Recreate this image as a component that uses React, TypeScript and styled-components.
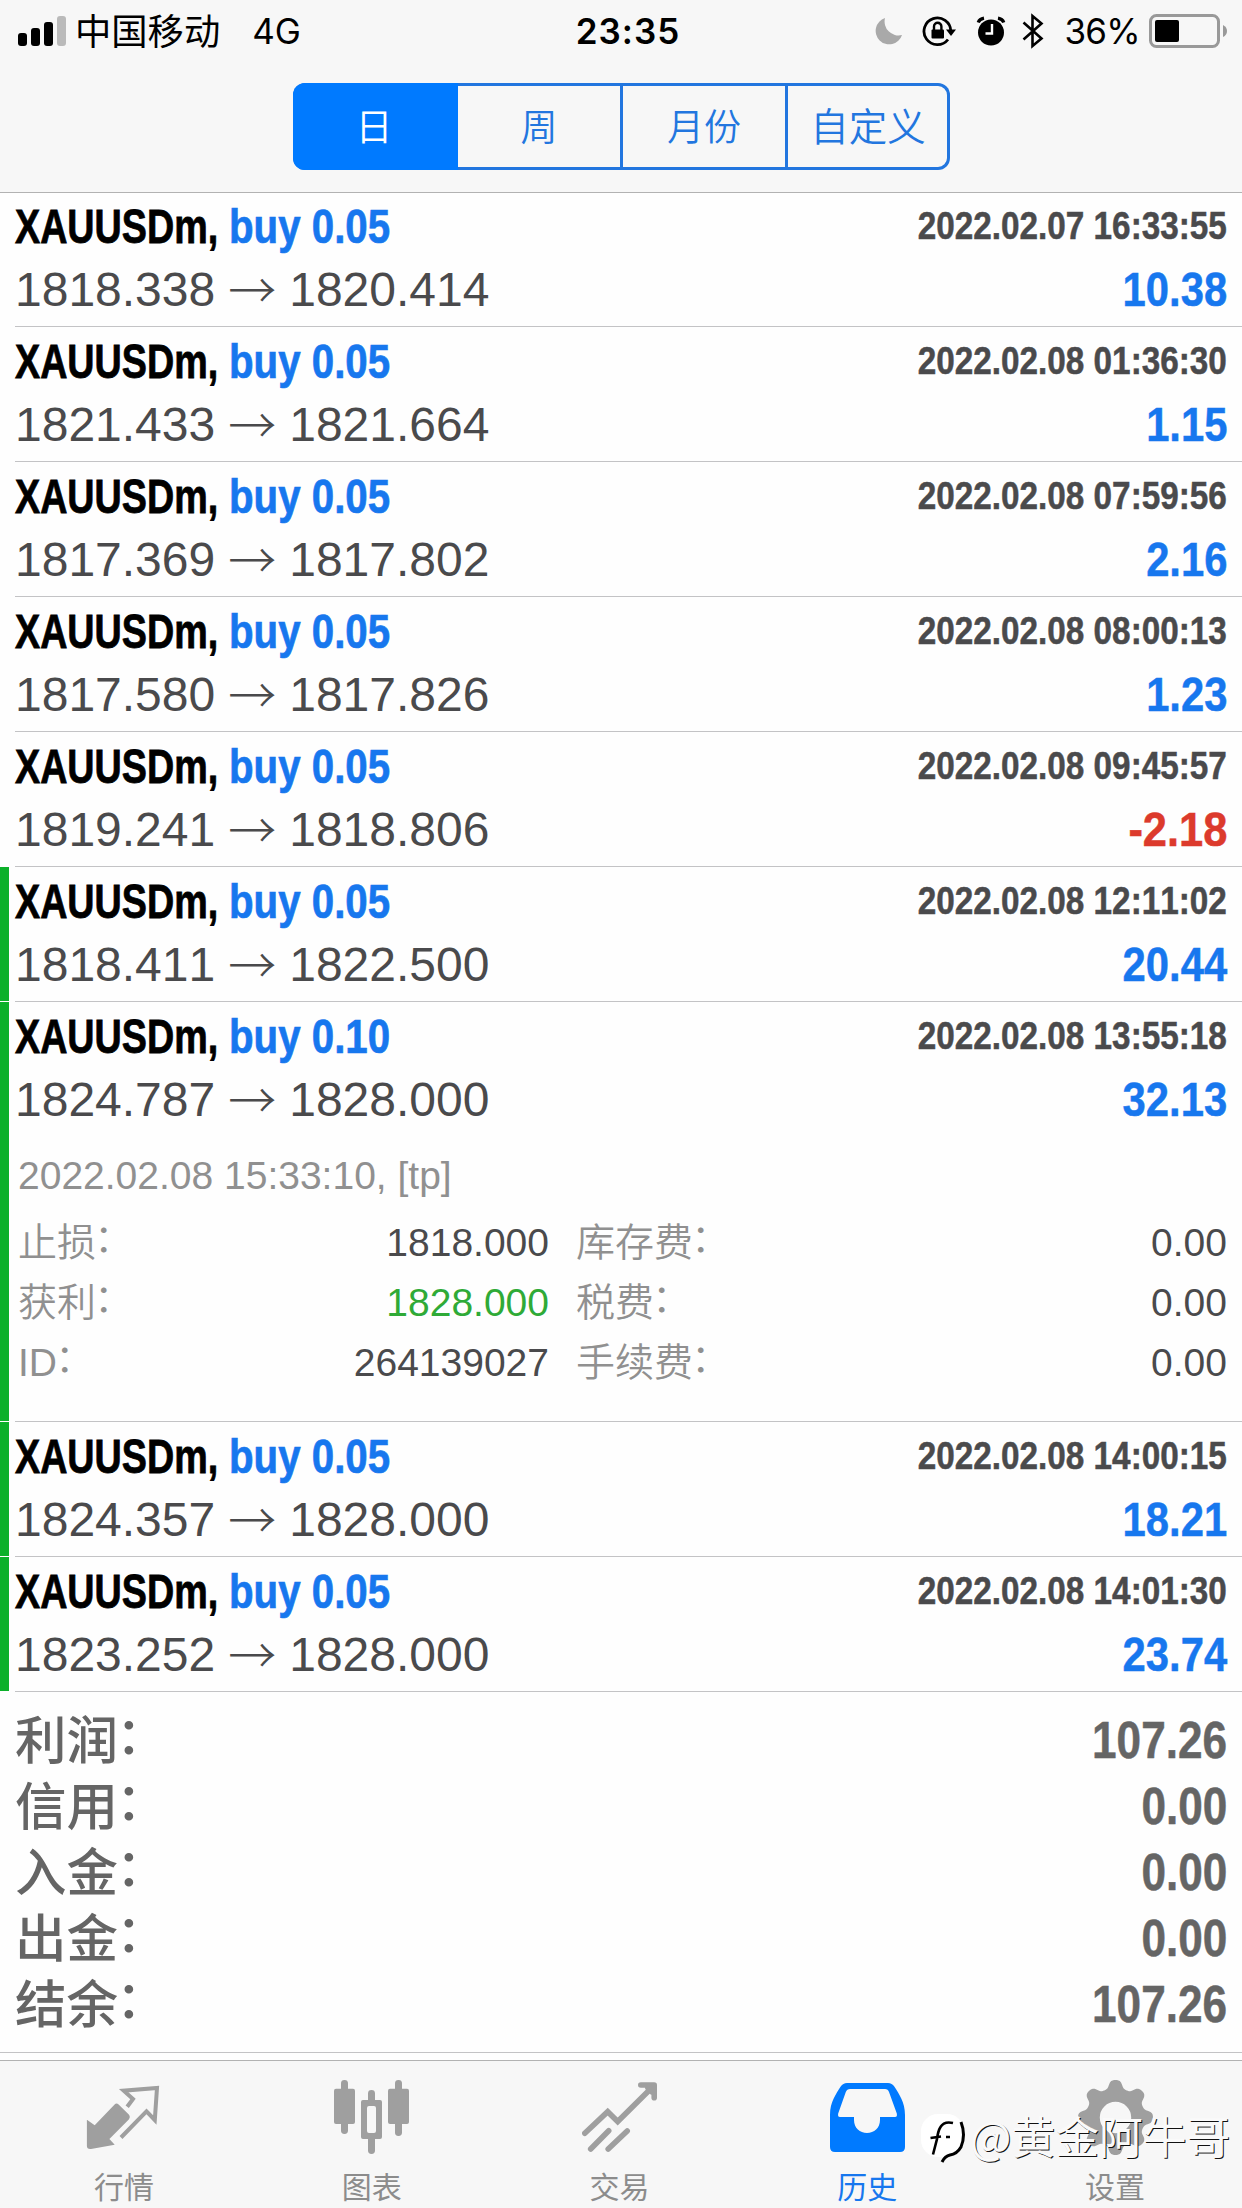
import React from "react";
import styled, { createGlobalStyle, css } from "styled-components";

const sans = `"Liberation Sans", "Noto Sans CJK SC", sans-serif`;
const system = `Inter, "Noto Sans CJK SC", sans-serif`;
const cjk = `"Noto Sans CJK SC", sans-serif`;

const color = {
  chrome: "#f7f7f7",
  hairline: "#c3c3c5",
  barLine: "#b2b2b2",
  accent: "#007aff",
  segment: "#2276df",
  buy: "#1777ee",
  sell: "#dc3a2c",
  ink: "#4a4a4c",
  muted: "#909090",
  summary: "#656565",
  tab: "#9f9f9f",
  tabText: "#8c8c8c",
  takeProfit: "#0cb02a",
};

const GlobalStyle = createGlobalStyle`
  body { margin: 0; background: #fff; }
  * { box-sizing: border-box; }
`;

const Screen = styled.div`
  position: relative;
  display: flex;
  flex-direction: column;
  width: 1242px;
  height: 2208px;
  overflow: hidden;
  background: #fefefe;
  font-family: ${sans};
  font-kerning: none;
  color: ${color.ink};
  white-space: nowrap;
`;

/* ---------- header ---------- */

const Header = styled.header`
  flex: none;
  height: 193px;
  background: ${color.chrome};
  border-bottom: 1px solid ${color.barLine};
`;

const StatusBar = styled.div`
  display: grid;
  grid-template-columns: 1fr auto 1fr;
  height: 62px;
  padding: 0 15px 0 18px;
  color: #000;
  font: 400 35px/62px ${system};
`;

const StatusSide = styled.div<{ $end?: boolean }>`
  display: flex;
  align-items: center;
  justify-content: ${(p) => (p.$end ? "flex-end" : "flex-start")};
`;

const Carrier = styled.span`
  height: 62px;
  margin: 0 32px 0 8px;
  font: 400 36.3px/58px ${cjk};
`;

const Clock = styled.span`
  font-weight: 600;
  letter-spacing: 1px;
  padding-left: 11px;
`;

const StatusGlyph = styled.svg<{ $gap?: number }>`
  flex: none;
  margin-right: ${(p) => p.$gap ?? 0}px;
`;

const Percent = styled.span`
  margin-right: 9px;
  letter-spacing: -0.7px;
`;

const Segments = styled.div`
  display: grid;
  grid-template-columns: 165px 165px 165px 162px;
  width: 657px;
  height: 87px;
  margin: 21px 0 0 293px;
  border-radius: 12px;
  overflow: hidden;
  box-shadow: inset 0 0 0 3px ${color.segment};
`;

const Segment = styled.button<{ $on?: boolean }>`
  border: 0;
  border-right: 3px solid ${color.segment};
  padding: 0 0 4px;
  background: ${(p) => (p.$on ? color.accent : "transparent")};
  color: ${(p) => (p.$on ? "#fff" : color.segment)};
  font: 350 37px/82px ${cjk};
  text-align: center;
  &:first-child { border-color: ${color.accent}; }
  &:last-child { border-right: 0; padding: 0 2px 6px 0; font-size: 38.5px; line-height: 80px; }
`;

/* ---------- deals ---------- */

const Deals = styled.main`
  flex: none;
  margin-top: -1px;
`;

const Deal = styled.article<{ $hit?: boolean; $tall?: boolean }>`
  display: flex;
  height: ${(p) => (p.$tall ? 420 : 135)}px;
  background: ${(p) =>
    p.$hit
      ? `linear-gradient(${color.takeProfit}, ${color.takeProfit}) 0 0 / 9px calc(100% - 1px) no-repeat`
      : "none"};
`;

const DealBody = styled.div`
  flex: 1;
  margin-left: 15px;
  padding: 5px 15px 0 0;
  border-bottom: 1px solid ${color.hairline};
`;

const Line = styled.div<{ $h: number }>`
  display: flex;
  justify-content: space-between;
  align-items: center;
  height: ${(p) => p.$h}px;
`;

const narrow = css<{ $sx: number }>`
  display: inline-block;
  font-weight: 700;
  transform: scaleX(${(p) => p.$sx});
`;

const Title = styled.div`
  display: flex;
  font-size: 48.5px;
  line-height: 58px;
  font-kerning: normal;
`;

const Symbol = styled.span<{ $sx: number }>`
  ${narrow}
  width: 214px;
  transform-origin: left;
  color: #000;
  -webkit-text-stroke: 0.8px #000;
`;

const Side = styled.span<{ $sx: number }>`
  ${narrow}
  transform-origin: left;
  color: ${color.buy};
  -webkit-text-stroke: 0.7px ${color.buy};
`;

const Time = styled.span<{ $sx: number }>`
  ${narrow}
  transform-origin: right;
  font-size: 38px;
  line-height: 58px;
  -webkit-text-stroke: 0.5px ${color.ink};
`;

const Prices = styled.span`
  display: flex;
  font-size: 48px;
  line-height: 70px;
`;

const Arrow = styled.span`
  width: 48px;
  height: 70px;
  margin: 0 13px;
  font: 300 48px/64px ${cjk};
`;

const Profit = styled.span<{ $sx: number; $loss: boolean }>`
  ${narrow}
  transform-origin: right;
  font-size: 48px;
  line-height: 70px;
  color: ${(p) => (p.$loss ? color.sell : color.buy)};
  -webkit-text-stroke: 0.5px currentColor;
`;

const Comment = styled.p`
  margin: 4px 0 0 3px;
  font-size: 39px;
  line-height: 74px;
  color: ${color.muted};
`;

const Details = styled.dl`
  display: grid;
  grid-template-columns: 200px 331px 200px 1fr;
  margin: 0;
  padding-left: 3px;
  font-size: 39px;
  line-height: 60px;
`;

const Label = styled.dt<{ $second?: boolean }>`
  height: 60px;
  padding-left: ${(p) => (p.$second ? 27 : 0)}px;
  color: ${color.muted};
  font-weight: 350;
`;

/* Lifts the full-width colon to the optical middle of the characters without stretching the line. */
const Colon = styled.span<{ $lift: number }>`
  line-height: 0;
  margin-left: -2px;
  vertical-align: ${(p) => p.$lift}px;
`;

const Value = styled.dd<{ $green?: boolean }>`
  margin: 0;
  height: 60px;
  text-align: right;
  color: ${(p) => (p.$green ? "#2faa37" : color.ink)};
`;

/* ---------- summary ---------- */

const Summary = styled.section`
  flex: none;
  height: 361px;
  padding: 16px 15px 0 15px;
  border-bottom: 1px solid ${color.hairline};
  color: ${color.summary};
`;

const SummaryLabel = styled.span`
  height: 66px;
  font: 500 51.5px/57px ${cjk};
`;

const SummaryValue = styled.span<{ $sx: number }>`
  ${narrow}
  transform-origin: right;
  font-size: 51px;
  line-height: 66px;
  -webkit-text-stroke: 0.5px currentColor;
`;

/* ---------- tab bar ---------- */

const TabBar = styled.nav`
  flex: none;
  display: flex;
  height: 148px;
  margin-top: 7px;
  padding-right: 3px;
  background: ${color.chrome};
  border-top: 1px solid ${color.barLine};
`;

const Tab = styled.a<{ $on?: boolean }>`
  flex: 1;
  display: flex;
  flex-direction: column;
  align-items: center;
  padding-top: 19px;
  color: ${(p) => (p.$on ? color.accent : color.tab)};
`;

const TabIcon = styled.svg`
  flex: none;
  width: 75px;
  height: 75px;
`;

const TabLabel = styled.span<{ $on?: boolean }>`
  margin-top: 10px;
  font: 400 30px/40px ${cjk};
  color: ${(p) => (p.$on ? color.buy : color.tabText)};
`;

const Watermark = styled.div`
  position: absolute;
  left: 920px;
  top: 2107px;
  display: flex;
  align-items: center;
  height: 60px;
  color: #fafafa;
  font: 400 43.8px/56px ${cjk};
  text-shadow: 1px 1px 0 #111;
`;

const WatermarkText = styled.span`
  height: 60px;
`;

const WatermarkLogo = styled.svg`
  width: 46px;
  height: 52px;
  margin-right: 4px;
`;

const deals = [
  ["0.05", "2022.02.07 16:33:55", "1818.338", "1820.414", "10.38"],
  ["0.05", "2022.02.08 01:36:30", "1821.433", "1821.664", "1.15"],
  ["0.05", "2022.02.08 07:59:56", "1817.369", "1817.802", "2.16"],
  ["0.05", "2022.02.08 08:00:13", "1817.580", "1817.826", "1.23"],
  ["0.05", "2022.02.08 09:45:57", "1819.241", "1818.806", "-2.18"],
  ["0.05", "2022.02.08 12:11:02", "1818.411", "1822.500", "20.44"],
  ["0.10", "2022.02.08 13:55:18", "1824.787", "1828.000", "32.13"],
  ["0.05", "2022.02.08 14:00:15", "1824.357", "1828.000", "18.21"],
  ["0.05", "2022.02.08 14:01:30", "1823.252", "1828.000", "23.74"],
];
const firstHit = 5;
const expanded = 6;

const details = [
  ["止损", "1818.000", "库存费", "0.00"],
  ["获利", "1828.000", "税费", "0.00"],
  ["ID", "264139027", "手续费", "0.00"],
];

const totals = [
  ["利润", "107.26"],
  ["信用", "0.00"],
  ["入金", "0.00"],
  ["出金", "0.00"],
  ["结余", "107.26"],
];

function gearPath() {
  const points: string[] = [];
  for (let i = 0; i < 160; i++) {
    const a = (i / 160) * Math.PI * 2;
    const r = 33.4 + (4.1 * Math.tanh(1.6 * Math.cos(8 * a))) / Math.tanh(1.6);
    points.push(`${(37.5 + r * Math.sin(a)).toFixed(2)} ${(37.5 - r * Math.cos(a)).toFixed(2)}`);
  }
  return `M${points.join("L")}ZM37.5 21.8a15.7 15.7 0 1 0 0 31.4a15.7 15.7 0 1 0 0-31.4Z`;
}

const tabs = [
  {
    label: "行情",
    icon: (
      <>
        <path
          d="M.9 39.7 8.7 45.3 28.6 24.4Q30.6 22.4 32.6 24.6L42.8 34.6Q44.8 37 42.8 39.4L23.4 59 28.7 64.7 5 69Q.9 69.5.9 66Z"
          fill="currentColor"
        />
        <path
          d="M41.2 26.8 47 19 37.7 10.7 71 7.9 68.8 40 60.5 31.3 35 57.5"
          fill="none"
          stroke="currentColor"
          strokeWidth="4"
        />
      </>
    ),
  },
  {
    label: "图表",
    icon: (
      <g fill="currentColor">
        <rect x="0" y="8.7" width="21" height="35.3" rx="2" />
        <rect x="7" y="0" width="7" height="54" rx="3.4" />
        <path
          fillRule="evenodd"
          d="M29 20H46a2 2 0 0 1 2 2V57a2 2 0 0 1-2 2H29a2 2 0 0 1-2-2V22a2 2 0 0 1 2-2ZM35 26a2 2 0 0 0-2 2V51a2 2 0 0 0 2 2H40a2 2 0 0 0 2-2V28a2 2 0 0 0-2-2Z"
        />
        <path d="M34 21V13.4a3.5 3.4 0 0 1 7 0V21ZM34 58V70.6a3.5 3.4 0 0 0 7 0V58Z" />
        <rect x="54" y="8.7" width="21" height="35.3" rx="2" />
        <rect x="61" y="0" width="7" height="56" rx="3.4" />
      </g>
    ),
  },
  {
    label: "交易",
    icon: (
      <g fill="none" stroke="currentColor" strokeWidth="5.6" strokeLinecap="round">
        <path d="M2.8 53.3 25.7 31.7 35.7 41.5 71.5 6" strokeLinejoin="miter" />
        <path d="M58.8 5H72.2V17.8M66 8 70 12" strokeLinejoin="round" />
        <path d="M8.7 69 26.7 50.8M26.2 69 45.2 51" />
      </g>
    ),
  },
  {
    label: "历史",
    icon: (
      <path
        fill="currentColor"
        fillRule="evenodd"
        d="M0 67V35C0 22 6 14 10.7 6.5Q13 3 17 3H58Q62 3 64.3 6.5C69 14 75 22 75 35V67Q75 72 70 72H5Q0 72 0 67ZM20 9Q17 9 15.8 12L8.2 33.5Q7.5 37 10 37H24V40C24 48 30 53 37 53S50 48 50 40V37H65Q67.5 37 66.8 33.5L59 12Q58 9 55 9Z"
      />
    ),
  },
  { label: "设置", icon: <path fill="currentColor" fillRule="evenodd" d={gearPath()} /> },
];

function StatusIcons() {
  return (
    <>
      <StatusGlyph width="28" height="28" viewBox="0 0 28 28" $gap={19}>
        <path d="M10 1A14 14 0 0 0 27 18A13.5 13.5 0 1 1 10 1Z" fill="#a9a9a9" />
      </StatusGlyph>
      <StatusGlyph width="35" height="32" viewBox="0 0 35 32" $gap={19}>
        <path d="M26 24.5A13.4 13.4 0 1 1 28.8 16" fill="none" stroke="#000" strokeWidth="2.8" />
        <path d="M24 14.5H34L29 21Z" />
        <rect x="9.5" y="14.5" width="12.5" height="9" rx="1" />
        <path d="M12 15V11.5a3.7 3.7 0 0 1 7.4 0V15" fill="none" stroke="#000" strokeWidth="2.4" />
      </StatusGlyph>
      <StatusGlyph width="30" height="30" viewBox="0 0 30 30" $gap={16}>
        <circle cx="15" cy="16.5" r="13" />
        <path d="M2.2 6.5Q3.5 3 8 2.2M27.8 6.5Q26.5 3 22 2.2" fill="none" stroke="#000" strokeWidth="3.2" />
        <path d="M16 8V17.5H9.5" fill="none" stroke="#fff" strokeWidth="2.4" />
      </StatusGlyph>
      <StatusGlyph width="22" height="36" viewBox="0 0 22 36" $gap={20}>
        <path
          d="M1.5 9.5 19.5 25.5 10.5 33V3L19.5 10.5 1.5 26.5"
          fill="none"
          stroke="#000"
          strokeWidth="2.6"
        />
      </StatusGlyph>
    </>
  );
}

export default function App() {
  return (
    <Screen>
      <GlobalStyle />
      <Header>
        <StatusBar>
          <StatusSide>
            <StatusGlyph width="49" height="32" viewBox="0 0 49 32">
              <rect x="0" y="18" width="9" height="13" rx="3" />
              <rect x="13" y="13" width="9" height="18" rx="3" />
              <rect x="26" y="7" width="9" height="24" rx="3" />
              <rect x="39" y="1" width="9" height="30" rx="3" fill="#bababa" />
            </StatusGlyph>
            <Carrier>中国移动</Carrier>
            <span>4G</span>
          </StatusSide>
          <Clock>23:35</Clock>
          <StatusSide $end>
            <StatusIcons />
            <Percent>36%</Percent>
            <StatusGlyph width="78" height="34" viewBox="0 0 78 34">
              <rect x="1.5" y="1.5" width="68" height="31" rx="6" fill="none" stroke="#999" strokeWidth="3" />
              <rect x="6" y="6" width="24" height="22" rx="2" />
              <path d="M74 11q4 2 4 6t-4 6Z" fill="#999" />
            </StatusGlyph>
          </StatusSide>
        </StatusBar>
        <Segments>
          <Segment $on>日</Segment>
          <Segment>周</Segment>
          <Segment>月份</Segment>
          <Segment>自定义</Segment>
        </Segments>
      </Header>

      <Deals>
        {deals.map(([volume, time, open, close, profit], i) => {
          const loss = profit.startsWith("-");
          return (
            <Deal key={time} $hit={i >= firstHit} $tall={i === expanded}>
              <DealBody>
                <Line $h={58}>
                  <Title>
                    <Symbol $sx={0.777}>XAUUSDm,</Symbol>
                    <Side $sx={0.83}>buy {volume}</Side>
                  </Title>
                  <Time $sx={0.876}>{time}</Time>
                </Line>
                <Line $h={70}>
                  <Prices>
                    {open}
                    <Arrow>→</Arrow>
                    {close}
                  </Prices>
                  <Profit $sx={loss ? 0.905 : 0.87} $loss={loss}>
                    {profit}
                  </Profit>
                </Line>
                {i === expanded && (
                  <>
                    <Comment>2022.02.08 15:33:10, [tp]</Comment>
                    <Details>
                      {details.map(([left, leftValue, right, rightValue]) => (
                        <React.Fragment key={left}>
                          <Label>
                            {left}
                            <Colon $lift={4}>：</Colon>
                          </Label>
                          <Value $green={left === "获利"}>{leftValue}</Value>
                          <Label $second>
                            {right}
                            <Colon $lift={4}>：</Colon>
                          </Label>
                          <Value>{rightValue}</Value>
                        </React.Fragment>
                      ))}
                    </Details>
                  </>
                )}
              </DealBody>
            </Deal>
          );
        })}
      </Deals>

      <Summary>
        {totals.map(([label, value]) => (
          <Line $h={66} key={label}>
            <SummaryLabel>
              {label}
              <Colon $lift={5}>：</Colon>
            </SummaryLabel>
            <SummaryValue $sx={0.865}>{value}</SummaryValue>
          </Line>
        ))}
      </Summary>

      <TabBar>
        {tabs.map(({ label, icon }) => (
          <Tab key={label} $on={label === "历史"}>
            <TabIcon viewBox="0 0 75 75">{icon}</TabIcon>
            <TabLabel $on={label === "历史"}>{label}</TabLabel>
          </Tab>
        ))}
      </TabBar>

      <Watermark>
        <WatermarkLogo viewBox="0 0 46 52">
          <rect x="1" y="3" width="43" height="43" rx="17" fill="#fff" />
          <path
            d="M33 12Q24 10 20.5 16Q18 20 17 28L13 43.5M10.5 27 21 25.5M26 26H30"
            fill="none"
            stroke="#000"
            strokeWidth="2.6"
          />
          <path d="M41 11Q46 24 41 36Q37 43 30 44Q25 45 22 51" fill="none" stroke="#000" strokeWidth="3" />
        </WatermarkLogo>
        <WatermarkText>@黄金阿牛哥</WatermarkText>
      </Watermark>
    </Screen>
  );
}
